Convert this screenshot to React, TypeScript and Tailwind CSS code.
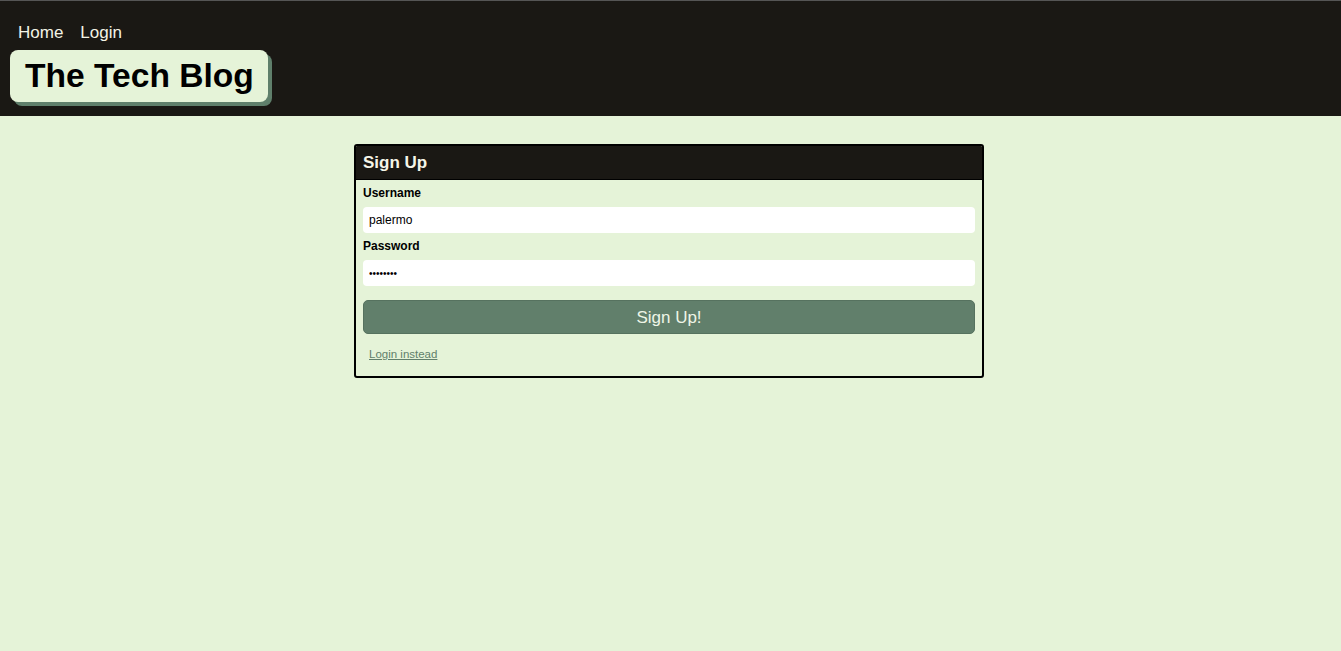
export default function App() {
    return (
        <div className="min-h-[651px] bg-[#e5f3d8] font-['Liberation_Sans',Arial,sans-serif]">
            <header className="bg-[#1a1814] border-t border-[#555] h-[116px] pt-[22px] px-[10px]">
                <nav className="flex gap-[17px] pl-[8px] text-[17px] leading-[20px] text-[#f3f3e6]">
                    <a href="#">Home</a>
                    <a href="#">Login</a>
                </nav>
                <div className="mt-[7px] inline-block bg-[#e5f3d8] rounded-[8px] shadow-[4px_4px_0_#5f7f6b] pl-[15px] pr-[14px] h-[52px] leading-[52px]">
                    <h1 className="text-[33.6px] font-bold text-black">The Tech Blog</h1>
                </div>
            </header>
            <main className="flex justify-center pt-[28px] pr-[3px]">
                <div className="w-[630px] border-2 border-black rounded-[3px] overflow-hidden">
                    <div className="bg-[#1a1814] h-[34px] px-[7px] flex items-center border-b border-black">
                        <h2 className="text-[17px] font-bold text-[#f5f5e8]">Sign Up</h2>
                    </div>
                    <form className="px-[7px] pt-[5px] pb-[15px]" onSubmit={(e) => e.preventDefault()}>
                        <label className="block text-[12px] font-bold text-black leading-[16px]">Username</label>
                        <input
                            type="text"
                            defaultValue="palermo"
                            className="mt-[6px] w-full h-[26px] bg-white rounded-[4px] px-[6px] text-[12px] text-black outline-none"
                        />
                        <label className="block mt-[5px] text-[12px] font-bold text-black leading-[16px]">Password</label>
                        <input
                            type="password"
                            defaultValue="palermo1"
                            className="mt-[6px] w-full h-[26px] bg-white rounded-[4px] px-[6px] text-[10px] text-black outline-none"
                        />
                        <button
                            type="submit"
                            className="mt-[14px] w-full h-[34px] pt-[2px] bg-[#617f6b] rounded-[5px] border border-[#56725f] text-[17px] text-[#eef5e6]"
                        >
                            Sign Up!
                        </button>
                        <a href="#" className="block mt-[13px] ml-[6px] text-[11.5px] leading-[14px] text-[#617f6b] underline">
                            Login instead
                        </a>
                    </form>
                </div>
            </main>
        </div>
    );
}
